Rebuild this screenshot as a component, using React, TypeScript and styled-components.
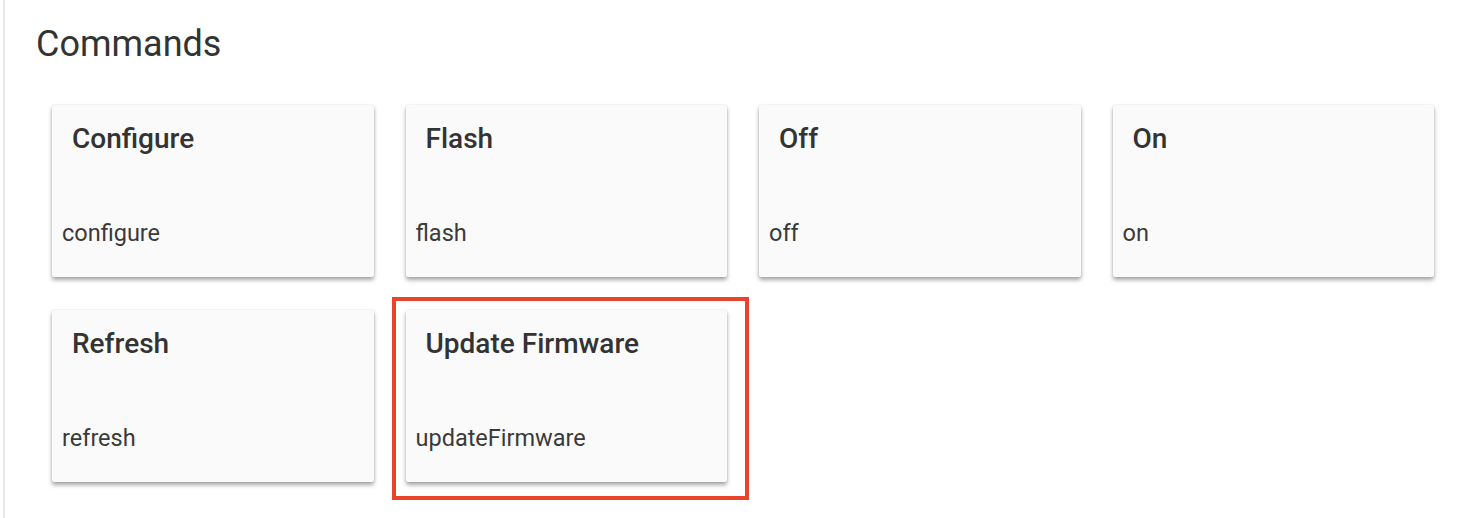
import React from "react";
import styled, { createGlobalStyle } from "styled-components";

const GlobalStyle = createGlobalStyle`
  html, body {
    margin: 0;
    padding: 0;
    background: #ffffff;
    font-family: Roboto, "Liberation Sans", Arial, sans-serif;
  }
`;

const Page = styled.div`
  margin-left: 3px;
  border-left: 2px solid #e6e6e6;
  min-height: 518px;
  box-sizing: border-box;
  padding-left: 31px;
  padding-top: 22px;
`;

const Heading = styled.h2`
  margin: 0;
  font-size: 36px;
  font-weight: 400;
  line-height: 44px;
  color: #333333;
`;

const Grid = styled.div`
  display: grid;
  grid-template-columns: repeat(4, 321.5px);
  column-gap: 32px;
  row-gap: 33px;
  margin-top: 39px;
  margin-left: 16px;
`;

const Card = styled.div`
  position: relative;
  height: 172px;
  background: #fafafa;
  border-radius: 2px;
  box-shadow: 0 3px 4px rgba(0, 0, 0, 0.35), 0 0 2px rgba(0, 0, 0, 0.12);
  display: flex;
  flex-direction: column;
  justify-content: space-between;
  box-sizing: border-box;
  padding-top: 16px;
  padding-bottom: 29px;
`;

const Highlight = styled.div`
  position: absolute;
  top: -13px;
  left: -14px;
  right: -22px;
  bottom: -18px;
  border: 4px solid #e8442c;
  pointer-events: none;
`;

const Title = styled.div`
  padding-left: 20px;
  font-size: 28px;
  font-weight: 500;
  line-height: 36px;
  color: #333333;
`;

const Command = styled.div`
  padding-left: 10px;
  font-size: 23.5px;
  font-weight: 400;
  line-height: 30px;
  color: #3a3a3a;
`;

const commands = [
  { title: "Configure", name: "configure" },
  { title: "Flash", name: "flash" },
  { title: "Off", name: "off" },
  { title: "On", name: "on" },
  { title: "Refresh", name: "refresh" },
  { title: "Update Firmware", name: "updateFirmware", highlight: true },
];

export default function App() {
  return (
    <>
      <GlobalStyle />
      <Page>
        <Heading>Commands</Heading>
        <Grid>
          {commands.map((c) => (
            <Card key={c.name}>
              <Title>{c.title}</Title>
              <Command>{c.name}</Command>
              {c.highlight && <Highlight />}
            </Card>
          ))}
        </Grid>
      </Page>
    </>
  );
}
